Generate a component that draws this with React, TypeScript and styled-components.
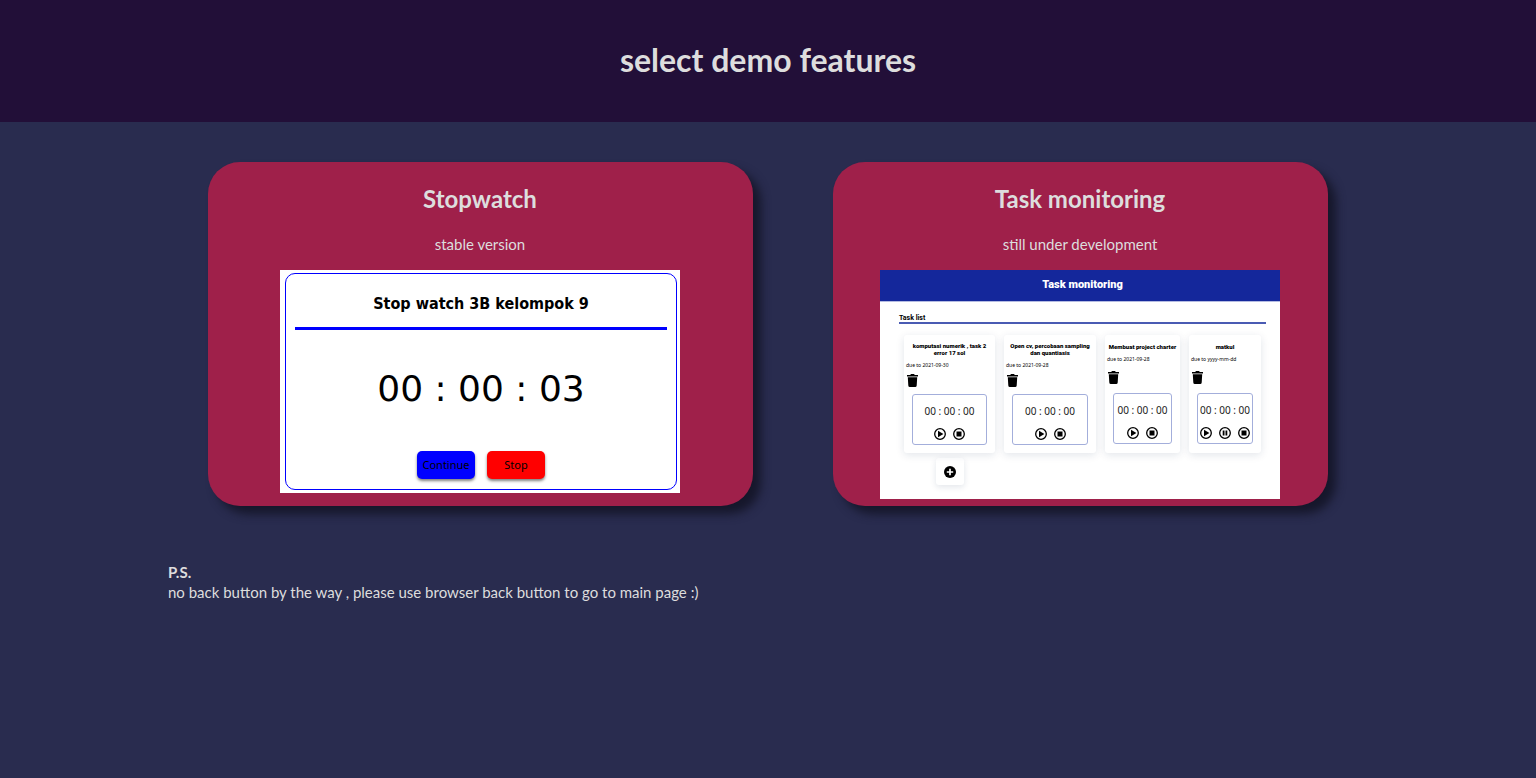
import React from "react";
import styled, { createGlobalStyle } from "styled-components";

const GlobalStyle = createGlobalStyle`
  *, *::before, *::after { box-sizing: border-box; }
  body {
    margin: 0;
    min-height: 100vh;
    background: #292c4f;
    color: #dddddd;
    font-family: Lato, "Open Sans", sans-serif;
    font-size: 15px;
    line-height: 20px;
  }
  h1, h2, h3, h4, p { margin: 0; }
  button { border: 0; padding: 0; font: inherit; color: inherit; cursor: pointer; }
`;

const Header = styled.header`
  display: flex;
  align-items: center;
  justify-content: center;
  padding: 40px 20px 42px;
  background: #220f38;
`;

const PageTitle = styled.h1`
  font-size: 32px;
  line-height: 40px;
  font-weight: 700;
`;

const Main = styled.main`
  max-width: 1200px;
  margin: 0 auto;
`;

const Features = styled.div`
  display: grid;
  grid-template-columns: 545fr 495fr;
  gap: 80px;
  padding: 40px;
`;

const FeatureCard = styled.article`
  display: flex;
  flex-direction: column;
  align-items: center;
  padding: 22px 1px 7px 0;
  border-radius: 32px;
  background: #9f204a;
  box-shadow: 8px 8px 10px #16172b;
`;

const FeatureTitle = styled.h2`
  font-size: 24px;
  line-height: 30px;
  font-weight: 700;
`;

const FeatureNote = styled.p`
  margin: 20px 0 16px;
`;

const StopwatchPreview = styled.div`
  width: 400px;
  max-width: 100%;
  padding: 3px 3px 3px 5px;
  background: #ffffff;
  color: #000000;
`;

const StopwatchFrame = styled.div`
  display: flex;
  flex-direction: column;
  padding: 18px 9px 10px;
  border: 1px solid #0000ff;
  border-radius: 10px;
`;

const StopwatchTitle = styled.h3`
  padding-bottom: 11px;
  border-bottom: 3px solid #0000ff;
  font: 700 16px/24px "DejaVu Sans Condensed", "Noto Sans", sans-serif;
  text-align: center;
`;

const StopwatchTime = styled.p`
  margin: 37px 0 40px;
  font: 36px/44px "DejaVu Sans", sans-serif;
  text-align: center;
`;

const StopwatchActions = styled.div`
  display: flex;
  justify-content: center;
  gap: 12px;
`;

const ActionButton = styled.button<{ $color: string }>`
  width: 58px;
  height: 28px;
  border-radius: 5px;
  background: ${(p) => p.$color};
  box-shadow: 0 2px 3px rgba(0, 0, 0, 0.5);
  font: 11px/14px "Noto Sans", sans-serif;
`;

const TaskPreview = styled.div`
  width: 400px;
  max-width: 100%;
  padding-bottom: 14px;
  background: #ffffff;
  color: #000000;
  font-family: "Noto Sans", sans-serif;
`;

const TaskHeader = styled.h3`
  padding: 8px 0 9px 5px;
  border-bottom: 1px solid #b4bbe2;
  background: #14279b;
  color: #ffffff;
  font: 900 11px/14px Roboto, sans-serif;
  text-align: center;
`;

const TaskBody = styled.div`
  padding: 13px 14px 0 19px;
`;

const TaskListTitle = styled.h4`
  border-bottom: 2px solid #4a5bb3;
  font: 700 7px/7px Roboto, sans-serif;
`;

const TaskList = styled.div`
  display: flex;
  gap: 9px;
  padding: 11px 5px 0;
`;

const TaskCard = styled.section<{ $width: number; $short?: boolean }>`
  display: flex;
  flex-direction: column;
  flex: 0 1 ${(p) => p.$width}px;
  height: 118px;
  padding: ${(p) => (p.$short ? "8px 0 9px" : "7px 0 8px")};
  border-radius: 3px;
  background: #ffffff;
  box-shadow: 0 2px 8px rgba(20, 39, 80, 0.12);
`;

const TaskName = styled.h4<{ $short?: boolean }>`
  padding: 0 ${(p) => (p.$short ? 0 : 3)}px;
  font: 900 6px/7px Roboto, sans-serif;
  text-align: center;
`;

const TaskDue = styled.p`
  margin: 5px 2px;
  font-size: 5px;
  line-height: 8px;
`;

const DeleteButton = styled.button<{ $short?: boolean }>`
  align-self: flex-start;
  display: flex;
  margin: ${(p) => (p.$short ? 3 : 0)}px 3px 0;
  background: none;
`;

const Timer = styled.div`
  display: flex;
  flex-direction: column;
  align-items: center;
  justify-content: space-between;
  height: 51px;
  margin: auto 8px 0;
  padding: 10px 0 4px;
  border: 1px solid #a3aedb;
  border-radius: 3px;
  color: #222222;
  font-size: 10px;
  line-height: 13px;
  white-space: nowrap;
`;

const TimerActions = styled.div`
  display: flex;
  gap: 7px;
`;

const IconButton = styled.button`
  display: flex;
  background: none;
`;

const AddButton = styled.button`
  display: flex;
  align-items: center;
  justify-content: center;
  width: 28px;
  height: 27px;
  margin: 5px 0 0 37px;
  border-radius: 3px;
  background: #ffffff;
  box-shadow: 0 2px 6px rgba(20, 39, 80, 0.12);
`;

const Postscript = styled.section`
  padding-top: 16px;
`;

const PostscriptTitle = styled.h2`
  font-size: 15px;
  line-height: 20px;
`;

function TrashIcon() {
  return (
    <svg width="11" height="13" viewBox="0 0 11 13" aria-hidden="true">
      <path d="M0 1h3.2l.8-1h3l.8 1H11v1.600H0zM.8 3.200h9.400l-.5 8.300Q9.600 13 8.200 13H2.800Q1.400 13 1.300 11.500z" />
    </svg>
  );
}

const glyphs = {
  play: <path d="M4 2.800 9.400 6 4 9.200z" />,
  pause: <path d="M3.700 3.500h1.800v5H3.700zM6.500 3.500h1.800v5H6.500z" />,
  stop: <path d="M3.500 3.500h5v5h-5z" />,
};

type Control = keyof typeof glyphs;

function ControlIcon({ kind }: { kind: Control }) {
  return (
    <svg width="12" height="12" viewBox="0 0 12 12" aria-hidden="true">
      <circle cx="6" cy="6" r="5.300" fill="none" stroke="#000" strokeWidth="1.300" />
      {glyphs[kind]}
    </svg>
  );
}

function PlusIcon() {
  return (
    <svg width="12" height="12" viewBox="0 0 12 12" aria-hidden="true">
      <circle cx="6" cy="6" r="6" />
      <path d="M6 2.800v6.400M2.800 6h6.400" stroke="#fff" strokeWidth="1.700" />
    </svg>
  );
}

interface Task {
  name: string;
  due: string;
  width: number;
  short?: boolean;
  controls: Control[];
}

const tasks: Task[] = [
  { name: "komputasi numerik , task 2 error 17 sol", due: "2021-09-30", width: 91, controls: ["play", "stop"] },
  { name: "Open cv, percobaan sampling dan quantiasis", due: "2021-09-28", width: 92, controls: ["play", "stop"] },
  { name: "Membuat project charter", due: "2021-09-28", width: 75, short: true, controls: ["play", "stop"] },
  { name: "matkul", due: "yyyy-mm-dd", width: 72, short: true, controls: ["play", "pause", "stop"] },
];

export default function App() {
  return (
    <>
      <GlobalStyle />
      <Header>
        <PageTitle>select demo features</PageTitle>
      </Header>
      <Main>
        <Features>
          <FeatureCard>
            <FeatureTitle>Stopwatch</FeatureTitle>
            <FeatureNote>stable version</FeatureNote>
            <StopwatchPreview>
              <StopwatchFrame>
                <StopwatchTitle>Stop watch 3B kelompok 9</StopwatchTitle>
                <StopwatchTime>00 : 00 : 03</StopwatchTime>
                <StopwatchActions>
                  <ActionButton $color="#0000ff">Continue</ActionButton>
                  <ActionButton $color="#ff0000">Stop</ActionButton>
                </StopwatchActions>
              </StopwatchFrame>
            </StopwatchPreview>
          </FeatureCard>
          <FeatureCard>
            <FeatureTitle>Task monitoring</FeatureTitle>
            <FeatureNote>still under development</FeatureNote>
            <TaskPreview>
              <TaskHeader>Task monitoring</TaskHeader>
              <TaskBody>
                <TaskListTitle>Task list</TaskListTitle>
                <TaskList>
                  {tasks.map((task) => (
                    <TaskCard key={task.name} $width={task.width} $short={task.short}>
                      <TaskName $short={task.short}>{task.name}</TaskName>
                      <TaskDue>due to {task.due}</TaskDue>
                      <DeleteButton aria-label="Delete task" $short={task.short}>
                        <TrashIcon />
                      </DeleteButton>
                      <Timer>
                        <span>00 : 00 : 00</span>
                        <TimerActions>
                          {task.controls.map((kind) => (
                            <IconButton key={kind} aria-label={kind}>
                              <ControlIcon kind={kind} />
                            </IconButton>
                          ))}
                        </TimerActions>
                      </Timer>
                    </TaskCard>
                  ))}
                </TaskList>
                <AddButton aria-label="Add task">
                  <PlusIcon />
                </AddButton>
              </TaskBody>
            </TaskPreview>
          </FeatureCard>
        </Features>
        <Postscript>
          <PostscriptTitle>P.S.</PostscriptTitle>
          <p>no back button by the way , please use browser back button to go to main page :)</p>
        </Postscript>
      </Main>
    </>
  );
}
